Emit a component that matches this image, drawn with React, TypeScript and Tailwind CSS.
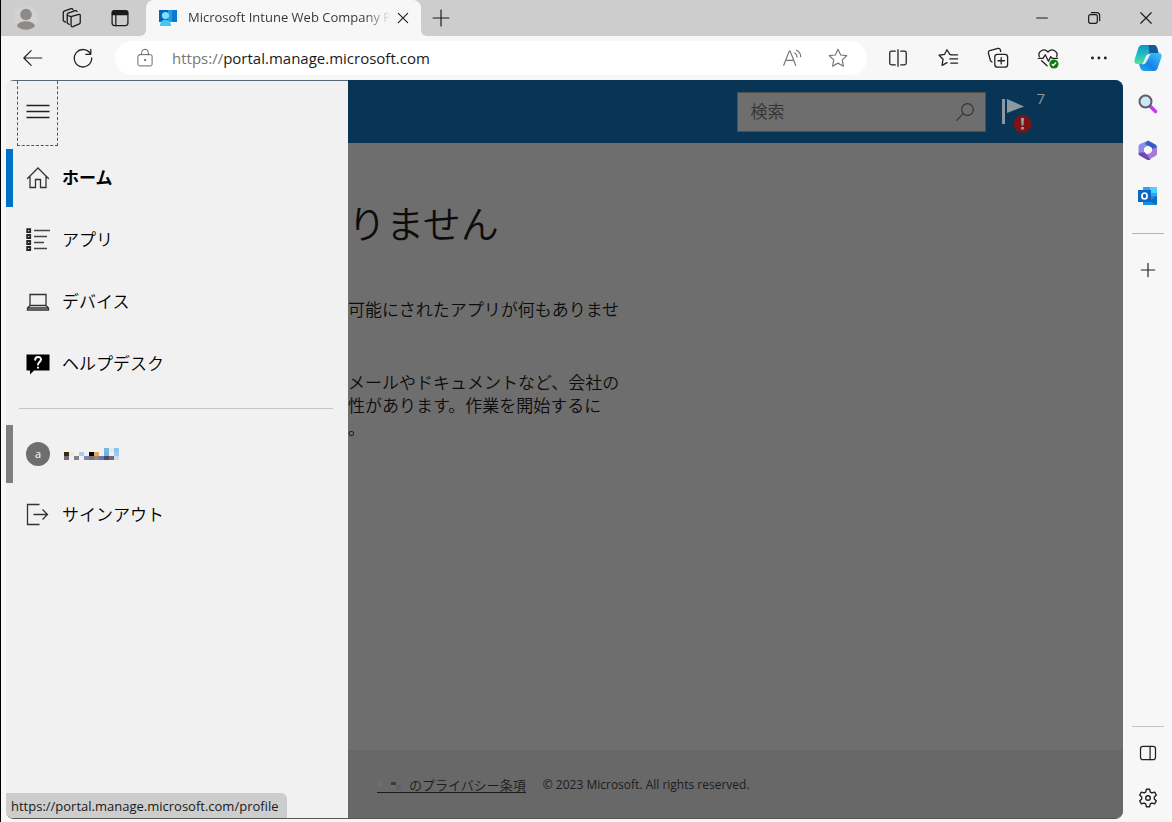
import { ReactNode } from 'react';

type IconProps = { children: ReactNode; size?: number; className?: string; width?: number };

function Icon({ children, size = 24, className = '', width = 1.2 }: IconProps) {
    return (
        <svg
            width={size}
            height={size}
            viewBox="0 0 24 24"
            fill="none"
            stroke="currentColor"
            strokeWidth={width}
            strokeLinecap="round"
            strokeLinejoin="round"
            className={`shrink-0 ${className}`}
            aria-hidden="true"
        >
            {children}
        </svg>
    );
}

const menu = [
    {
        label: 'ホーム',
        active: true,
        icon: (
            <Icon className="text-[#333333]" width={1.3}>
                <path d="M1.500 12.500 12 2l10.500 10.500M4 10.500V21.500H9.500V13.500H14.500V21.500H20V10.500" strokeLinejoin="miter" />
            </Icon>
        ),
    },
    {
        label: 'アプリ',
        active: false,
        icon: (
            <Icon width={1.5} className="text-[#444444]">
                <path
                    d="M1.200 1.200h3v3h-3zM1.200 7h3v3h-3zM1.200 13h3v3h-3zM1.200 19h3v3h-3z"
                    strokeLinejoin="miter"
                    strokeWidth="1.800"
                    className="text-[#222222]"
                    stroke="currentColor"
                />
                <path d="M8 2.500h16M8 8.500h13M8 14.500h10M8 20.500h13" strokeLinecap="butt" />
            </Icon>
        ),
    },
    {
        label: 'デバイス',
        active: false,
        icon: (
            <Icon width={1.3} className="text-[#333333]">
                <path d="M4 4.500h16v11H4zM4 15.500 1.500 18v2h21v-2L20 15.500M1.500 18h21" strokeLinejoin="miter" />
            </Icon>
        ),
    },
    {
        label: 'ヘルプデスク',
        active: false,
        icon: (
            <Icon>
                <path d="M.5 2.500h23v16H8l-4 4v-4H.5z" fill="black" stroke="none" />
                <path d="M9.200 7.800c0-3.800 5.800-3.800 5.800-.3 0 2.300-3 2.500-3 5M12 15.400v.4" stroke="white" strokeWidth="2" />
            </Icon>
        ),
    },
];

// [column, row, colour] of the blurred account name
const nameBlocks: [number, number, string][] = [
    [8, 0, '#7ab8dc'], [9, 0, '#e3eaf0'], [10, 0, '#8cc4ee'],
    [0, 1, '#3a2a10'], [1, 1, '#ede6e0'], [3, 1, '#a8cfe6'], [5, 1, '#000000'],
    [6, 1, '#dba868'], [8, 1, '#6fb4da'], [10, 1, '#9ec9f2'],
    [0, 2, '#6c6c7c'], [2, 2, '#808080'], [4, 2, '#8088b0'], [5, 2, '#787878'], [6, 2, '#a08078'],
    [7, 2, '#6078c0'], [8, 2, '#4c4868'], [9, 2, '#6c6c74'], [10, 2, '#c8def6'],
];

function TabStrip() {
    return (
        <header className="flex h-9 bg-[#f7f7f7] text-[#1a1a1a]">
            <div className="flex w-[145px] items-center rounded-br-md bg-[#cdcdcd] pl-[2px]">
                <button aria-label="プロファイル" className="flex w-[46px] justify-center">
                    <svg width="24" height="24" viewBox="0 0 24 24" aria-hidden="true">
                        <circle cx="12" cy="12" r="12" fill="#d3d2d1" />
                        <circle cx="12" cy="8.500" r="5.800" fill="#8d8b8a" />
                        <path d="M3 20c1-6.500 17-6.500 18 0-4 5-14 5-18 0z" fill="#8d8b8a" />
                    </svg>
                </button>
                <button aria-label="ワークスペース" className="flex w-[46px] justify-center">
                    <Icon size={22} width={1.4}>
                        <path d="m11 10.500 8.500-2.500q1.500-.3 1.500 1.200V17q0 1-1 1.500L13 21.500q-2 .5-2-1.500zM11 10.500 6.500 9M6.800 17.500V8q0-1 1-1.400L15.500 4q1.500-.3 2 .8M2.500 15V6q0-1 1-1.500l7.500-2.700q1.500-.3 2 1M6.800 17.500 9 19M2.500 15l2.300 1.500" />
                    </Icon>
                </button>
                <button aria-label="タブ操作" className="flex w-[50px] justify-center">
                    <Icon size={20} width={1.5}>
                        <rect x="2.500" y="3" width="19" height="18" rx="3" />
                        <path d="M3 6h18v2H3zM3 4h18v2H3z" fill="currentColor" />
                        <path d="M7 8v13" />
                    </Icon>
                </button>
            </div>
            <div className="flex w-[275px] bg-[#cdcdcd]">
                <div className="flex flex-1 items-center rounded-t-lg bg-[#f7f7f7] pl-3">
                    <svg width="20" height="18" viewBox="0 0 20 18" className="shrink-0" aria-hidden="true">
                        <path d="M1 1h9v12H1z" fill="#0a5fb8" />
                        <path d="M10 1h9v12h-9z" fill="#1b9de8" />
                        <path d="M14 1h5v12h-5z" fill="#0f7ad2" />
                        <circle cx="7.500" cy="6.500" r="3.600" fill="#7fe0fa" />
                        <path d="M2 17c0-4 2-6.200 5.500-6.200S13 13 13 17z" fill="#45c7f4" />
                    </svg>
                    <span className="ml-[10px] w-[207px] bg-linear-to-r from-[#333333] from-85% to-transparent to-98% bg-clip-text text-[13px] whitespace-nowrap text-transparent">
                        Microsoft Intune Web Company P
                    </span>
                    <button aria-label="タブを閉じる" className="flex">
                        <Icon size={16} width={1.6}><path d="m5 5 14 14M19 5 5 19" /></Icon>
                    </button>
                </div>
            </div>
            <div className="flex flex-1 items-center rounded-bl-md bg-[#cdcdcd] pl-[10px]">
                <button aria-label="新しいタブ" className="flex">
                    <Icon size={20} width={1.4}><path d="M12 2.500v19M2.500 12h19" /></Icon>
                </button>
                <div className="flex-1" />
                <button aria-label="最小化" className="flex w-[52px] justify-center">
                    <Icon size={16} width={1.6}><path d="M4 12h16" /></Icon>
                </button>
                <button aria-label="元に戻す" className="flex w-[52px] justify-center">
                    <Icon size={16} width={1.8}>
                        <rect x="4" y="7" width="13" height="13" rx="3" />
                        <path d="M8 4h8q4.500 0 4.500 4.500V16" />
                    </Icon>
                </button>
                <button aria-label="閉じる" className="flex w-[52px] justify-center">
                    <Icon size={18} width={1.5}><path d="m5 5 14 14M19 5 5 19" /></Icon>
                </button>
            </div>
        </header>
    );
}

function Toolbar() {
    return (
        <div className="flex h-11 items-center pl-[7px] text-[#222222]">
            <button aria-label="戻る" className="flex w-[50px] justify-center">
                <Icon width={1.3} size={22}><path d="M21.500 12H2M10 4l-8 8 8 8" /></Icon>
            </button>
            <button aria-label="更新" className="flex w-[50px] justify-center">
                <Icon width={1.4} size={22}><path d="M20.500 8A9.500 9.500 0 1 0 21.500 12M20.500 2.500V8H15" /></Icon>
            </button>
            <div className="ml-[7px] flex h-[34px] flex-1 items-center rounded-full bg-white pl-5 text-[#777777]">
                <Icon size={20} className="text-[#666666]">
                    <rect x="3.500" y="8" width="17" height="13.500" rx="2" />
                    <path d="M8 8V5.500a4 4 0 0 1 8 0V8" />
                    <circle cx="12" cy="14.500" r=".8" fill="currentColor" />
                </Icon>
                <p className="ml-[17px] flex-1 text-[15px]">
                    https://<span className="text-[#1a1a1a]">portal.manage.microsoft.com</span>
                </p>
                <button aria-label="音声で読み上げる" className="flex w-[46px] justify-center">
                    <Icon size={22} width={1.3}>
                        <path d="M3 20 9 4.500h1L16 20M5 14.500h9M15 6.500q2.500 1.500 2.500 4.500M17 3.500q4.500 2.500 4.500 7" />
                    </Icon>
                </button>
                <button aria-label="お気に入りに追加" className="mr-[6px] flex w-[46px] justify-center">
                    <Icon size={22} width={1.3}>
                        <path d="m12 2.500 2.900 6.200 6.600.8-4.900 4.600 1.300 6.800-5.900-3.300-5.900 3.300 1.300-6.800-4.900-4.600 6.600-.8z" />
                    </Icon>
                </button>
            </div>
            <div className="ml-[6px] flex">
                <button aria-label="画面を分割する" className="flex w-[50px] justify-center">
                    <Icon size={22} width={1.4}>
                        <path d="M12 3v18M9 4.500H5q-2 0-2 2v11q0 2 2 2h4M15 4.500h4q2 0 2 2v11q0 2-2 2h-4" />
                    </Icon>
                </button>
                <button aria-label="お気に入り" className="flex w-[50px] justify-center">
                    <Icon size={22} width={1.4}>
                        <path d="M16 8.500 14 8l-3.200-5L8.300 8l-6 1 4.300 4.300L5.500 20l5.500-3M15 8.500h7.500M14 13h8.500M15 17.500h7.500" />
                    </Icon>
                </button>
                <button aria-label="コレクション" className="flex w-[50px] justify-center">
                    <Icon size={22} width={1.4}>
                        <rect x="8.500" y="8" width="14" height="14" rx="3" />
                        <path d="M15.500 11.500v7M12 15h7M5.500 16.500 3.800 15 1.500 6.500q-.3-2 1.500-2.500l9-2.500q2-.4 2.500 1.500l.5 2" />
                    </Icon>
                </button>
                <button aria-label="ブラウザーのエッセンシャル" className="flex w-[50px] justify-center">
                    <Icon size={22} width={1.4}>
                        <path d="M2.500 10.500c-2-5.500 5-10 9.500-5 4.500-5 11.500-.5 9.500 5M1.500 12.500h5l2.500-4 3.500 7 2.500-5 1.500 2h6M5 15l6 5.500" />
                        <circle cx="18.500" cy="18.500" r="5" fill="#0f7b10" stroke="none" />
                        <path d="m16.500 19 1.200 1.200 2.800-3" stroke="white" />
                    </Icon>
                </button>
                <button aria-label="設定など" className="flex w-[50px] justify-center">
                    <Icon size={22}>
                        <g fill="currentColor" stroke="none">
                            <circle cx="6" cy="12" r="1.600" />
                            <circle cx="13" cy="12" r="1.600" />
                            <circle cx="20" cy="12" r="1.600" />
                        </g>
                    </Icon>
                </button>
            </div>
        </div>
    );
}

function Drawer() {
    return (
        <nav className="w-[342px] shrink-0 border-t border-[#55677a] bg-[#f1f1f1] text-[17px] text-black">
            <button
                aria-label="メニュー"
                className="ml-[11px] flex h-[65px] w-[41px] items-center justify-center border border-t-0 border-dashed border-[#555555]"
            >
                <Icon className="text-[#222222]" width={1.3}>
                    <path d="M.5 4.500h23M.5 10.500h23M.5 16.500h23" strokeLinecap="butt" />
                </Icon>
            </button>
            <ul className="mt-[3px] flex flex-col gap-1">
                {menu.map((item) => (
                    <li key={item.label}>
                        <a
                            href="#"
                            className={`flex h-[58px] items-center gap-3 border-l-[7px] pl-[13px] ${
                                item.active ? 'border-[#0072c6] font-bold' : 'border-transparent font-[350]'
                            }`}
                        >
                            {item.icon}
                            {item.label}
                        </a>
                    </li>
                ))}
            </ul>
            <hr className="mt-[15px] mr-[15px] mb-4 ml-[13px] border-[#c4c4c4]" />
            <ul className="flex flex-col gap-[3px]">
                <li>
                    <a
                        href="#"
                        aria-label="プロファイル"
                        className="flex h-[58px] items-center gap-[14px] border-l-[7px] border-[#7f7f7f] pl-[13px]"
                    >
                        <span className="flex size-6 items-center justify-center rounded-full bg-[#6e6e6e] text-[11px] text-white">
                            a
                        </span>
                        <svg width="55" height="12" shapeRendering="crispEdges" aria-hidden="true">
                            {nameBlocks.map(([col, row, color]) => (
                                <rect key={`${col}-${row}`} x={col * 5} y={row * 4} width="5" height="4" fill={color} />
                            ))}
                        </svg>
                    </a>
                </li>
                <li>
                    <a href="#" className="flex h-[58px] items-center gap-3 pl-5 font-[350]">
                        <Icon width={1.3} className="text-[#333333]">
                            <path d="M13.500 1.500h-12v20h12M7.500 11.500h14M16.500 6.500l5 5-5 5" strokeLinejoin="miter" strokeLinecap="butt" />
                        </Icon>
                        サインアウト
                    </a>
                </li>
            </ul>
        </nav>
    );
}

function Portal() {
    return (
        <div className="flex min-w-0 flex-1 flex-col bg-[#6e6e6e] text-black">
            <div className="flex h-[63px] items-center justify-end bg-[#083455] pr-[78px]">
                <label className="flex h-10 w-[249px] items-center border border-[#50504c] bg-[#6e6e6e] pr-[10px] pl-3">
                    <input
                        type="search"
                        aria-label="検索"
                        placeholder="検索"
                        className="w-full min-w-0 flex-1 text-[17px] font-[350] outline-none placeholder:text-[#333333]"
                    />
                    <Icon size={20} className="text-[#333333]" width={1.4}>
                        <circle cx="15" cy="9" r="7" />
                        <path d="m10 14-8 8" />
                    </Icon>
                </label>
                <button aria-label="通知 7 件" className="ml-4 flex h-12 items-start">
                    <svg width="34" height="44" viewBox="0 0 34 44" className="mt-1" aria-hidden="true">
                        <path d="M0 7h3v25H0zM5 7l17 7.500L5 21z" fill="#8c98a2" />
                        <circle cx="20.500" cy="32" r="9" fill="#7a1419" />
                        <path d="M19 26h3l-.6 7.500h-1.800zM19.200 35h2.600v2.600h-2.600z" fill="#a3a3a3" />
                    </svg>
                    <span className="text-[15px] leading-5 text-[#8c98a2]">7</span>
                </button>
            </div>
            <main className="flex-1 font-[350] text-[#0c0c0c]">
                <h1 className="mt-[52px] text-[38px] leading-[56px] whitespace-nowrap">りません</h1>
                <p className="mt-[47px] text-[17px] leading-[23px]">可能にされたアプリが何もありませ</p>
                <p className="mt-[50px] text-[17px] leading-[23px]">
                    メールやドキュメントなど、会社の
                    <br />
                    性があります。作業を開始するに
                    <br />。
                </p>
            </main>
            <footer className="flex h-[68px] items-center gap-[17px] bg-[#686868] pt-0.5 pl-[29px] text-[12px] whitespace-nowrap text-[#1c1c1c]">
                <a href="#" className="flex items-center border-b border-[#1c1c1c] text-[13px] leading-[14px] font-[350]">
                    <svg width="32" height="12" shapeRendering="crispEdges" aria-hidden="true">
                        <path d="M0 2h5v5H0z" fill="#6c7060" />
                        <path d="M14 3h5v3h-5z" fill="#49382e" />
                        <path d="M19 6h5v5h-5z" fill="#596070" />
                        <path d="M14 6h5v5h-5z" fill="#6d6a66" />
                    </svg>
                    のプライバシー条項
                </a>
                <span>© 2023 Microsoft. All rights reserved.</span>
            </footer>
        </div>
    );
}

function Sidebar() {
    return (
        <aside className="flex w-[49px] shrink-0 flex-col items-center text-[#222222]">
            <button aria-label="Copilot" className="mt-2 flex">
                <svg width="28" height="28" viewBox="0 0 28 28" aria-hidden="true">
                    <defs>
                        <linearGradient id="copilotLeft" x1="0" y1="0" x2="0" y2="1">
                            <stop offset="0" stopColor="#1590c8" />
                            <stop offset=".6" stopColor="#22c5bf" />
                            <stop offset="1" stopColor="#5fe08c" />
                        </linearGradient>
                        <linearGradient id="copilotRight" x1="1" y1="0" x2="0" y2="1">
                            <stop offset="0" stopColor="#41c9f5" />
                            <stop offset=".6" stopColor="#1a7fe6" />
                            <stop offset="1" stopColor="#22b0f0" />
                        </linearGradient>
                    </defs>
                    <path d="M8 1h12q2.500 0 3.500 4l1 4h-6q-3 0-4 3l-2 5q-1 3-4 3H3q-3 0-2.500-4L4 5q1-4 4-4z" fill="url(#copilotLeft)" />
                    <path d="M20 27H10q-3 0-4-4l-1-3h4q3 0 4-3l2.500-5q1-3 4-3H25q3 0 2.500 4L24 23q-1 4-4 4z" fill="url(#copilotRight)" />
                    <path d="M14.500 1h5q3 0 4 4l1 4h-6q-2 0-3 1z" fill="#155a9c" />
                    <path d="M15.500 10 11 19q-1 1.500-2.500 1.500L12 12q1-2 3.500-2z" fill="#f7f7f7" />
                </svg>
            </button>
            <button aria-label="検索" className="mt-[22px] flex">
                <svg width="20" height="20" viewBox="0 0 20 20" aria-hidden="true">
                    <path d="m12.500 12.500 5 5" stroke="#c239f2" strokeWidth="3.500" strokeLinecap="round" />
                    <circle cx="7.500" cy="7.500" r="6" fill="#c9e6fa" stroke="#5e5e5e" strokeWidth="2" />
                </svg>
            </button>
            <button aria-label="Microsoft 365" className="mt-[26px] flex">
                <svg width="20" height="20" viewBox="0 0 20 20" aria-hidden="true">
                    <path d="M10 .5 2 4Q.5 5 .5 6.500v8L6 12V8l6-3.500z" fill="#8f8bea" />
                    <path d="m10 .5 7.500 4Q19 5.500 19 7v6l-5-2V8L7 4z" fill="#2f5fc0" />
                    <path d="M14 9 19 7v6.500q0 1.500-1.500 2.500L11 19.500Q10 20 9 19.500L5 16l9-5z" fill="#a878dc" />
                    <path d="m.5 13 6-1 6 7.500q-2 1-4 0l-7-4Q.5 14.500.5 13z" fill="#7049ac" />
                    <circle cx="10" cy="10" r="3.700" fill="#f7f7f7" />
                </svg>
            </button>
            <button aria-label="Outlook" className="mt-[26px] flex">
                <svg width="20" height="20" viewBox="0 0 20 20" aria-hidden="true">
                    <path d="M5 1h14v12H5z" fill="#28a8ea" />
                    <path d="M12 1h7v6h-7z" fill="#50d0ff" />
                    <path d="M5 10h14v9H5z" fill="#1490df" />
                    <path d="m19 10-8 5 8 4z" fill="#0f6cbd" />
                    <path d="M0 4h13v12H0z" fill="#0a66c2" />
                    <ellipse cx="6.500" cy="10" rx="2.600" ry="3" fill="none" stroke="white" strokeWidth="1.700" />
                </svg>
            </button>
            <hr className="mt-[27px] w-8 border-[#b5b5b5]" />
            <button aria-label="カスタマイズ" className="mt-[26px] flex">
                <Icon size={20} width={1.4}><path d="M12 4v16M4 12h16" /></Icon>
            </button>
            <div className="flex-1" />
            <hr className="w-8 border-[#c4c4c4]" />
            <button aria-label="サイドバー" className="mt-4 flex">
                <Icon size={20} width={1.5}>
                    <rect x="3" y="4" width="18" height="16" rx="3" />
                    <path d="M14.500 4v16" />
                </Icon>
            </button>
            <button aria-label="設定" className="mt-6 mb-[13px] flex">
                <Icon size={22} width={1.5}>
                    <path d="M10.200 2.500h3.600l.7 3 1.800 1 2.900-.9 1.900 3.200-2.200 2.100v2.200l2.200 2.100-1.900 3.200-2.900-.9-1.800 1-.7 3h-3.600l-.7-3-1.800-1-2.900.9-1.900-3.200 2.200-2.100v-2.200L2.900 8.800l1.900-3.200 2.900.9 1.800-1z" />
                    <circle cx="12" cy="12" r="2.500" />
                </Icon>
            </button>
        </aside>
    );
}

export default function App() {
    return (
        <div className="flex min-h-screen flex-col border-l border-black bg-[#f7f7f7] font-['Open_Sans','Noto_Sans_CJK_JP',sans-serif]">
            <TabStrip />
            <div className="flex flex-1">
                <div className="flex min-w-0 flex-1 flex-col">
                    <Toolbar />
                    <div className="relative mb-[3px] ml-[5px] flex flex-1 overflow-hidden rounded-lg border-b border-[#555555]">
                        <Drawer />
                        <Portal />
                        <div className="absolute bottom-0 left-0 rounded-tr-md bg-[#cdcdcd] pt-0.5 pr-2 pl-[5px] text-[13px] leading-[23px] text-[#1a1a1a]">
                            https://portal.manage.microsoft.com/profile
                        </div>
                    </div>
                </div>
                <Sidebar />
            </div>
        </div>
    );
}
